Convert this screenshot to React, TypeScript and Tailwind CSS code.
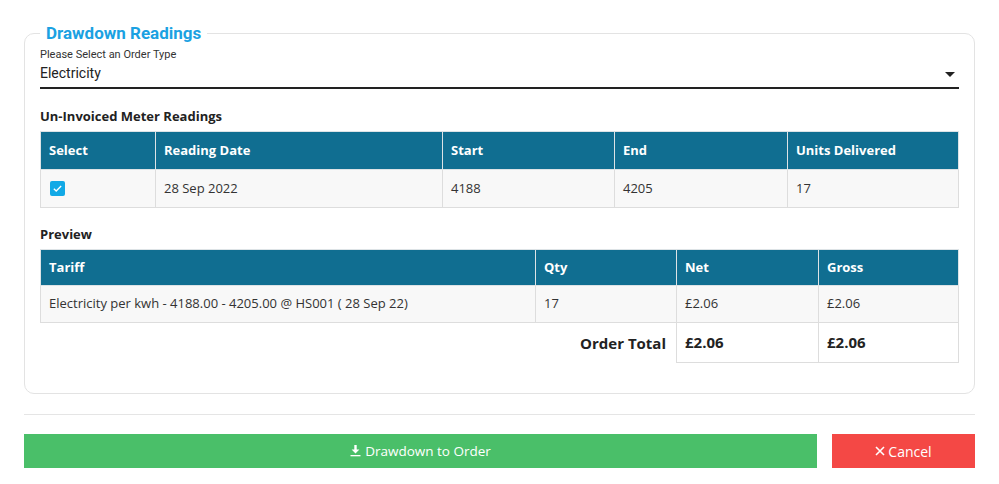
export default function App() {
    const th = 'h-[38px] px-2 text-left font-bold text-white text-[13px] border border-[#dde3e6] bg-[#106e91]';
    const td = 'h-[38px] px-2 text-[13px] text-[#333] border border-[#ddd] bg-[#f8f8f8]';

    return (
        <div className="min-h-[484px] bg-white px-6 pt-[21px]" style={{ fontFamily: '"Open Sans", "Liberation Sans", sans-serif' }}>
            <fieldset className="border border-[#e3e3e3] rounded-[10px] px-[15px] pb-[30px]">
                <legend className="px-[6px] text-[17px] leading-6 font-bold text-[#1ba1e2]" style={{ fontFamily: 'Roboto, sans-serif' }}>
                    Drawdown Readings
                </legend>

                <div className="mt-[3px]" style={{ fontFamily: 'Roboto, sans-serif' }}>
                    <label className="block text-[11px] leading-[14px] text-[#333]">Please Select an Order Type</label>
                    <div className="flex items-center justify-between h-[27px] pb-[3px] border-b-2 border-[#222]">
                        <span className="text-[14px] text-[#222]">Electricity</span>
                        <svg width="10" height="5" viewBox="0 0 10 5" className="mr-[4px] mt-[2px]">
                            <path d="M0 0h10L5 5z" fill="#222" />
                        </svg>
                    </div>
                </div>

                <h3 className="mt-[18px] mb-[6px] text-[13px] leading-[18px] font-bold text-[#222]">Un-Invoiced Meter Readings</h3>
                <table className="w-full table-fixed border-collapse">
                    <colgroup>
                        <col className="w-[115px]" />
                        <col className="w-[287px]" />
                        <col className="w-[172px]" />
                        <col className="w-[173px]" />
                        <col />
                    </colgroup>
                    <thead>
                        <tr>
                            <th className={th}>Select</th>
                            <th className={th}>Reading Date</th>
                            <th className={th}>Start</th>
                            <th className={th}>End</th>
                            <th className={th}>Units Delivered</th>
                        </tr>
                    </thead>
                    <tbody>
                        <tr>
                            <td className={td}>
                                <span className="flex items-center justify-center w-[15px] h-[15px] rounded-[2px] bg-[#12a9e6] ml-[1px]">
                                    <svg width="11" height="11" viewBox="0 0 12 12" fill="none">
                                        <path d="M2 6.2l2.6 2.6L10 3.2" stroke="white" strokeWidth="1.4" />
                                    </svg>
                                </span>
                            </td>
                            <td className={td}>28 Sep 2022</td>
                            <td className={td}>4188</td>
                            <td className={td}>4205</td>
                            <td className={td}>17</td>
                        </tr>
                    </tbody>
                </table>

                <h3 className="mt-[17px] mb-[6px] text-[13px] leading-[18px] font-bold text-[#222]">Preview</h3>
                <table className="w-full table-fixed border-collapse">
                    <colgroup>
                        <col className="w-[495px]" />
                        <col className="w-[141px]" />
                        <col className="w-[142px]" />
                        <col />
                    </colgroup>
                    <thead>
                        <tr>
                            <th className={th + ' !h-[36px]'}>Tariff</th>
                            <th className={th + ' !h-[36px]'}>Qty</th>
                            <th className={th + ' !h-[36px]'}>Net</th>
                            <th className={th + ' !h-[36px]'}>Gross</th>
                        </tr>
                    </thead>
                    <tbody>
                        <tr>
                            <td className={td + ' !h-[37px]'}>Electricity per kwh - 4188.00 - 4205.00 @ HS001 ( 28 Sep 22)</td>
                            <td className={td + ' !h-[37px]'}>17</td>
                            <td className={td + ' !h-[37px]'}>£2.06</td>
                            <td className={td + ' !h-[37px]'}>£2.06</td>
                        </tr>
                        <tr>
                            <td colSpan={2} className="h-[40px] pr-[10px] text-right text-[15px] font-bold text-[#222]">Order Total</td>
                            <td className="h-[40px] px-2 text-[15px] font-bold text-[#222] border border-[#ddd]">£2.06</td>
                            <td className="h-[40px] px-2 text-[15px] font-bold text-[#222] border border-[#ddd]">£2.06</td>
                        </tr>
                    </tbody>
                </table>
            </fieldset>

            <hr className="mt-[20px] border-t border-[#e5e5e5]" />

            <div className="flex gap-[15px] mt-[19px]">
                <button className="flex-1 h-[34px] flex items-center justify-center gap-[4px] bg-[#4abf69] text-white text-[13.5px]">
                    <svg width="11" height="12" viewBox="0 0 11 12">
                        <path d="M4.3 0h2.4v4.6H9.4L5.5 8.6 1.6 4.6h2.7z" fill="white" />
                        <rect x="0.5" y="10" width="10" height="1.3" fill="white" />
                    </svg>
                    Drawdown to Order
                </button>
                <button className="w-[143px] h-[34px] flex items-center justify-center gap-[3px] bg-[#f44845] text-white text-[14px]">
                    <svg width="10" height="10" viewBox="0 0 10 10">
                        <path d="M1 1l8 8M9 1l-8 8" stroke="white" strokeWidth="1.6" />
                    </svg>
                    Cancel
                </button>
            </div>
        </div>
    );
}
